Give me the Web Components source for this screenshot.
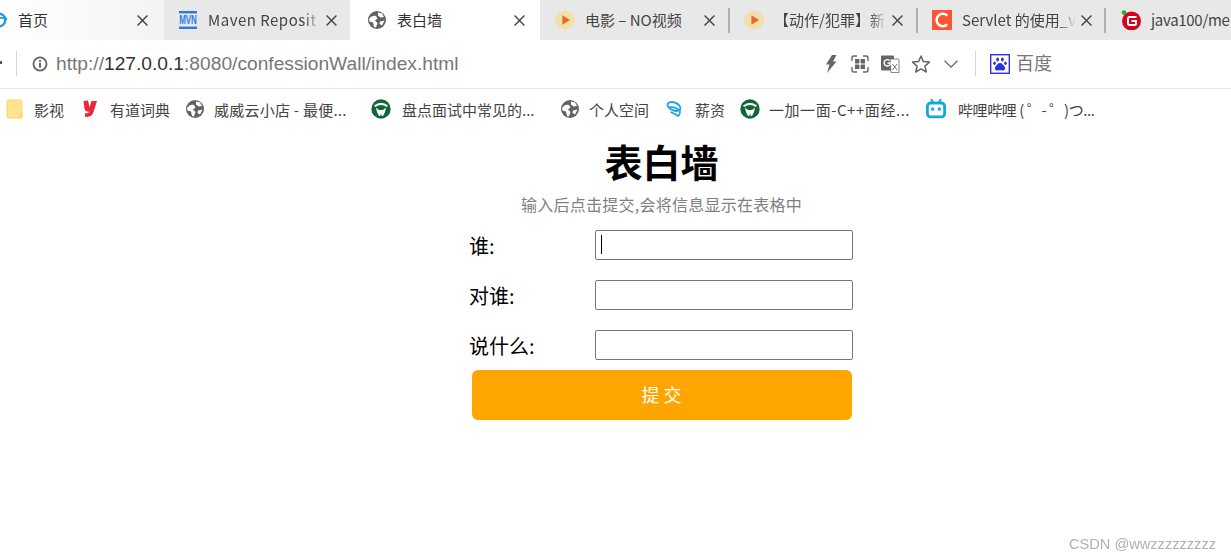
<!DOCTYPE html>
<html lang="zh">
<head>
<meta charset="utf-8">
<title>表白墙</title>
<style>
  html, body { margin: 0; height: 100%; background: #fff; overflow: hidden; }
  body { font-family: "Noto Sans CJK SC", sans-serif; }
  /* colouring of the url parts, these spans live in the light DOM */
  address-bar .dim { color: #777; }
  address-bar b { font-weight: 400; color: #333; }
</style>
</head>
<body>
<browser-window>
  <tab-strip slot="tabs">
    <browser-tab w="164" pad="-10" kind="first" gap="10" close="137"><app-icon name="swirl" slot="icon"></app-icon>首页</browser-tab>
    <browser-tab w="186" pad="14" gap="10" close="162" fade style="letter-spacing:.5px"><app-icon name="mvn" slot="icon"></app-icon>Maven Reposit</browser-tab>
    <browser-tab w="190" pad="17" gap="10" close="164" kind="active"><app-icon name="globe" slot="icon"></app-icon>表白墙</browser-tab>
    <browser-tab w="190" pad="15" gap="10" close="164" sep><app-icon name="play" slot="icon"></app-icon>电影 – NO视频</browser-tab>
    <browser-tab w="188" pad="14" gap="10" close="162" sep fade><app-icon name="play" slot="icon"></app-icon>【动作/犯罪】新</browser-tab>
    <browser-tab w="188" pad="14" gap="10" close="163" sep fade><app-icon name="csdn" slot="icon"></app-icon>Servlet 的使用_v</browser-tab>
    <browser-tab w="125" pad="15" gap="10" close="999" style="letter-spacing:-.3px"><app-icon name="gitee" slot="icon"></app-icon>java100/me</browser-tab>
  </tab-strip>
  <address-bar slot="toolbar">
    <span slot="url"><span class="dim">http://</span><b>127.0.0.1</b><span class="dim">:8080/confessionWall/index.html</span></span>
  </address-bar>
  <bookmark-bar slot="bookmarks">
    <bookmark-item w="80" pad="4" gap="10"><app-icon name="folder" slot="icon"></app-icon>影视</bookmark-item>
    <bookmark-item w="105" gap="10"><app-icon name="youdao" slot="icon"></app-icon>有道词典</bookmark-item>
    <bookmark-item w="186" gap="9" style="letter-spacing:.25px"><app-icon name="globe" slot="icon"></app-icon>威威云小店 - 最便...</bookmark-item>
    <bookmark-item w="189" gap="11"><app-icon name="shield" slot="icon"></app-icon>盘点面试中常见的...</bookmark-item>
    <bookmark-item w="105" gap="9"><app-icon name="globe" slot="icon"></app-icon>个人空间</bookmark-item>
    <bookmark-item w="75" gap="10"><app-icon name="ring" slot="icon"></app-icon>薪资</bookmark-item>
    <bookmark-item w="186" gap="9" style="letter-spacing:.55px"><app-icon name="shield" slot="icon"></app-icon>一加一面-C++面经...</bookmark-item>
    <bookmark-item w="175" gap="12" style="letter-spacing:-.4px"><app-icon name="bili" slot="icon"></app-icon>哔哩哔哩 ( ゜- ゜)つ...</bookmark-item>
  </bookmark-bar>
  <confession-form></confession-form>
</browser-window>
<page-mark>CSDN @wwzzzzzzzzz</page-mark>

<script>
// all the icons in one place, each drawn in a 20x20 box
const ICONS = {
  swirl: { size: 18, svg: `<circle cx="10" cy="10" r="7" fill="none" stroke="#1d9be8" stroke-width="2.6"/><path d="M2 11 C8 7 14 7 19 9" fill="none" stroke="#1d9be8" stroke-width="2"/>` },
  mvn: { size: 20, svg: `<rect x="1" y="1" width="18" height="2.4" fill="#2a7ae2"/><rect x="1" y="16.6" width="18" height="2.4" fill="#2a7ae2"/><text transform="translate(10 14) scale(1 1.5)" text-anchor="middle" font-family="Liberation Sans" font-weight="700" font-size="8" fill="#2a7ae2">MVN</text>` },
  globe: { size: 20, svg: `<circle cx="10" cy="10" r="9" fill="#5f6368"/><path d="M2 9 C4 6 7 5 9 6 L10.5 8.5 L8 10.5 L10.5 13 L9 17.5 L7 17 L6 12.5 L2.5 11.5 Z" fill="#fff"/><path d="M11 2.5 L15 3.5 L17 7 L13.5 7.5 L11 5.5 Z" fill="#fff"/><path d="M13 11.5 L17.5 10.5 L15 15.5 L12.5 14 Z" fill="#fff"/>` },
  play: { size: 20, svg: `<path d="M10 .3 L16 2.3 L19.7 7 L19.7 13 L16 17.7 L10 19.7 L4 17.7 L.3 13 L.3 7 L4 2.3 Z" fill="#f1dfac"/><path d="M7.4 5.2 L15 10 L7.4 14.8 Z" fill="#e66a22"/>` },
  csdn: { size: 20, svg: `<rect width="20" height="20" fill="#fc5531"/><path d="M15.2 5.6 A6.2 6.2 0 1 0 15.2 14.4" fill="none" stroke="#fff" stroke-width="2.6"/>` },
  gitee: { size: 20, svg: `<circle cx="10.5" cy="11" r="9.5" fill="#d8001b"/><path d="M15.5 7 H8.5 A1.5 1.5 0 0 0 7 8.5 V13.5 A1.5 1.5 0 0 0 8.5 15 H13.5 A1.5 1.5 0 0 0 15 13.5 V11 H10.5" fill="none" stroke="#fff" stroke-width="2"/><circle cx="3" cy="2.6" r="2.4" fill="#19b81f"/>` },
  folder: { size: 20, svg: `<rect x="3" y="1" width="15" height="18" rx="1.5" fill="#ffe48f" stroke="#f8d56f" stroke-width="1"/><rect x="15" y="15" width="3" height="4" rx="1" fill="#ffe48f" stroke="#f0c85a" stroke-width=".8"/>` },
  youdao: { size: 20, svg: `<path d="M3.5 2 L8 1.5 L9.5 8.5 L11.5 2 L17 2 L13.5 13 Q12 18.5 5 17.8 L5 14.3 Q8.5 14.6 9.4 12.8 Q5 13 4.5 9.5 Z" fill="#f0243a"/>` },
  shield: { size: 20, svg: `<circle cx="10" cy="10" r="9.7" fill="#0f6636"/><path d="M3 6.5 Q10 1.2 17 6.5 L15.8 8 Q10 4 4.2 8 Z" fill="#fff"/><path d="M5 8.5 L8 11 H12 L15 8.5 L14 13 L12 17 H10.8 L10 14.5 L9.2 17 H8 L6 13 Z" fill="#fff"/>` },
  ring: { size: 20, svg: `<ellipse cx="9" cy="7.5" rx="6.8" ry="4" transform="rotate(22 9 7.5)" fill="none" stroke="#1da1e6" stroke-width="1.8"/><path d="M3 8.5 Q10 7 15 12 Q15 16 13 17 Q9.5 14.5 5.5 13" fill="none" stroke="#1da1e6" stroke-width="1.7"/>` },
  bili: { size: 20, svg: `<path d="M5.5 .8 L8 4 M14.5 .8 L12 4" stroke="#14a9dc" stroke-width="2" stroke-linecap="round"/><rect x="1.4" y="4" width="17.2" height="13.8" rx="3" fill="none" stroke="#14a9dc" stroke-width="2.8"/><rect x="5.2" y="8.6" width="3" height="3" fill="#14a9dc"/><rect x="11.8" y="8.6" width="3" height="3" fill="#14a9dc"/>` },
  info: { size: 16, svg: `<circle cx="10" cy="10" r="8.2" fill="none" stroke="#5f6368" stroke-width="2.2"/><rect x="8.8" y="8.6" width="2.4" height="6" fill="#5f6368"/><rect x="8.8" y="5.2" width="2.4" height="2.3" fill="#5f6368"/>` },
  bolt: { size: 20, svg: `<path d="M12 1 H16.5 L13 7.5 H16.5 L7 19 L9.5 10.5 H6 Z" fill="#666"/>` },
  grid: { size: 20, svg: `<path d="M2 7 V4 Q2 2 4 2 H7 M13 2 H16 Q18 2 18 4 V7 M18 13 V16 Q18 18 16 18 H13 M7 18 H4 Q2 18 2 16 V13" fill="none" stroke="#666" stroke-width="1.4"/><rect x="5" y="5" width="4.4" height="4.4" rx=".6" fill="#666"/><rect x="10.6" y="5" width="4.4" height="4.4" rx=".6" fill="#666"/><rect x="5" y="10.6" width="4.4" height="4.4" rx=".6" fill="#666"/><rect x="10.6" y="10.6" width="4.4" height="4.4" rx=".6" fill="#666"/>` },
  translate: { size: 20, svg: `<rect x="1" y="1.5" width="13" height="15" rx="1" fill="#666"/><path d="M10 5 H18 Q19 5 19 6 V18.5 H11 Z" fill="#fff" stroke="#777" stroke-width=".9"/><path d="M9.5 6.5 A3.2 3.2 0 1 0 10 10.5 V9 H7.5" fill="none" stroke="#fff" stroke-width="1.4"/><path d="M12.5 10 L17 16 M17 10 L12.5 16" stroke="#777" stroke-width="1"/>` },
  star: { size: 20, svg: `<path d="M10 2 L12.4 7.6 L18.5 8.1 L13.9 12.1 L15.3 18 L10 14.9 L4.7 18 L6.1 12.1 L1.5 8.1 L7.6 7.6 Z" fill="none" stroke="#666" stroke-width="1.5" stroke-linejoin="round"/>` },
  chevron: { size: 16, svg: `<path d="M2 6 L10 14 L18 6" fill="none" stroke="#666" stroke-width="1.6"/>` },
  baidu: { size: 20, svg: `<rect x=".7" y=".7" width="18.6" height="18.6" fill="#fff" stroke="#2932e1" stroke-width="1.4"/><ellipse cx="7.6" cy="5.6" rx="1.4" ry="2" fill="#2932e1"/><ellipse cx="12.4" cy="5.6" rx="1.4" ry="2" fill="#2932e1"/><ellipse cx="4.6" cy="9.2" rx="1.3" ry="1.8" fill="#2932e1"/><ellipse cx="15.4" cy="9.2" rx="1.3" ry="1.8" fill="#2932e1"/><path d="M10 9 C12 9 13 11 14.5 12.5 C16 14.5 14.5 17 12.5 16.5 C11 16.2 9 16.2 7.5 16.5 C5.5 17 4 14.5 5.5 12.5 C7 11 8 9 10 9 Z" fill="#2932e1"/>` },
  close: { size: 11, svg: `<path d="M1 1 L19 19 M19 1 L1 19" stroke="#444" stroke-width="2.6"/>` }
};

class AppIcon extends HTMLElement {
  connectedCallback() {
    const icon = ICONS[this.getAttribute('name')];
    const root = this.shadowRoot || this.attachShadow({ mode: 'open' });
    root.innerHTML = `
      <style>:host { display: inline-flex; flex: none; letter-spacing: 0; } svg { display: block; }</style>
      <svg width="${icon.size}" height="${icon.size}" viewBox="0 0 20 20">${icon.svg}</svg>`;
  }
}

class BrowserWindow extends HTMLElement {
  constructor() {
    super();
    this.attachShadow({ mode: 'open' });
    this.shadowRoot.innerHTML = `
      <style>
        :host { display: flex; flex-direction: column; height: 100vh; }
      </style>
      <slot name="tabs"></slot>
      <slot name="toolbar"></slot>
      <slot name="bookmarks"></slot>
      <slot></slot>`;
  }
}

class TabStrip extends HTMLElement {
  constructor() {
    super();
    this.attachShadow({ mode: 'open' });
    this.shadowRoot.innerHTML = `
      <style>
        :host { display: flex; height: 40px; flex: none; background: #e8e8e8; overflow: hidden; }
      </style>
      <slot></slot>`;
  }
}

class BrowserTab extends HTMLElement {
  connectedCallback() {
    const root = this.shadowRoot || this.attachShadow({ mode: 'open' });
    const w = this.getAttribute('w');
    const pad = Number(this.getAttribute('pad'));
    const gap = Number(this.getAttribute('gap'));
    const close = Number(this.getAttribute('close'));
    const iconSize = pad < 0 ? 18 : 20;
    const titleEnd = this.hasAttribute('fade') ? close - 5 : close - 10;
    const titleWidth = close < 900 ? `width: ${titleEnd - pad - iconSize - gap}px;` : '';
    root.innerHTML = `
      <style>
        :host { display: flex; flex: none; box-sizing: border-box; position: relative;
                width: ${w}px; height: 40px; align-items: center;
                font: 15px "Noto Sans CJK SC", "Liberation Sans", sans-serif; color: #444; }
        :host([kind="active"]) { background: #fff; color: #333; }
        :host([kind="first"]) { background: linear-gradient(90deg, #fff, #f3f3f3); color: #333; }
        ::slotted([slot="icon"]) { margin-left: ${pad}px; }
        .title { margin: 0 0 2px ${gap}px; white-space: nowrap; ${titleWidth} }
        :host([fade]) .title { -webkit-mask-image: linear-gradient(90deg, #000 85%, transparent);
                 mask-image: linear-gradient(90deg, #000 85%, transparent); }
        .close { position: absolute; left: ${close}px; top: 15px; }
        :host([sep])::after { content: ""; position: absolute; right: 0; top: 8px;
                 width: 2px; height: 25px; background: #aeaeae; }
      </style>
      <slot name="icon"></slot>
      <span class="title"><slot></slot></span>
      ${close < 900 ? '<app-icon class="close" name="close"></app-icon>' : ''}`;
  }
}

class AddressBar extends HTMLElement {
  constructor() {
    super();
    this.attachShadow({ mode: 'open' });
    this.shadowRoot.innerHTML = `
      <style>
        :host { display: flex; align-items: center; height: 49px; flex: none; box-sizing: border-box;
                border-bottom: 1px solid #e6e6e6; background: #fff; padding-bottom: 1px; position: relative; }
        .stub { position: absolute; left: 0; top: 21px; width: 2px; height: 3px; background: #555; }
        .sep { width: 1px; height: 25px; background: #d5d5d5; flex: none; }
        .first { margin-left: 16px; }
        .info { margin: 0 8px 0 15px; }
        .url { flex: none; width: 764px; font: 19.2px "Liberation Sans", sans-serif; color: #777; white-space: nowrap; }
        .tools { display: flex; align-items: center; gap: 10px; }
        .star { margin-left: 1px; }
        .chevron { margin-left: 2px; }
        .baidu { margin: 0 6px 0 14px; }
        .label { font: 18px "Noto Sans CJK SC", sans-serif; color: #777; margin-bottom: 4px; }
        ::slotted(span) { white-space: nowrap; }
      </style>
      <span class="stub"></span>
      <span class="sep first"></span>
      <app-icon class="info" name="info"></app-icon>
      <span class="url"><slot name="url"></slot></span>
      <span class="tools">
        <app-icon name="bolt"></app-icon>
        <app-icon name="grid"></app-icon>
        <app-icon name="translate"></app-icon>
        <app-icon class="star" name="star"></app-icon>
        <app-icon class="chevron" name="chevron"></app-icon>
      </span>
      <span class="sep" style="margin-left:16px"></span>
      <app-icon class="baidu" name="baidu"></app-icon>
      <span class="label">百度</span>`;
  }
}

class BookmarkBar extends HTMLElement {
  constructor() {
    super();
    this.attachShadow({ mode: 'open' });
    this.shadowRoot.innerHTML = `
      <style>
        :host { display: flex; align-items: center; flex: none; background: #fff; padding-bottom: 3px; height: 40px; }
      </style>
      <slot></slot>`;
  }
}

class BookmarkItem extends HTMLElement {
  connectedCallback() {
    const root = this.shadowRoot || this.attachShadow({ mode: 'open' });
    const w = this.getAttribute('w');
    const pad = this.getAttribute('pad') || 0;
    const gap = this.getAttribute('gap');
    root.innerHTML = `
      <style>
        :host { display: flex; align-items: center; flex: none; box-sizing: border-box;
                width: ${w}px; padding-left: ${pad}px; gap: ${gap}px;
                font: 15px "Noto Sans CJK SC", "Liberation Sans", sans-serif; color: #444; white-space: nowrap; }
      </style>
      <slot name="icon"></slot>
      <span><slot></slot></span>`;
  }
}

// the page itself: heading, three labelled inputs, submit button
class ConfessionForm extends HTMLElement {
  constructor() {
    super();
    this.attachShadow({ mode: 'open' });
    this.shadowRoot.innerHTML = `
      <style>
        :host { display: flex; flex-direction: column; align-items: center; padding-left: 92px;
                font-family: "Noto Sans CJK SC", sans-serif; color: #000; }
        h1 { margin: 4px 0 0; font-size: 38px; line-height: 50px; font-weight: 700; }
        p { margin: 6px 0 0; font-size: 16px; line-height: 24px; color: #808080; letter-spacing: .26px; }
        .rows { width: 383px; margin-top: 14px; display: flex; flex-direction: column; gap: 20px; }
        .row { display: grid; grid-template-columns: 125px 258px; align-items: center; height: 30px; position: relative; font-size: 20px; }
        .row > span:first-child { margin-left: -1px; }
        input { box-sizing: border-box; width: 258px; height: 30px; margin: 0; padding: 0 5px;
                border: 1px solid #767676; border-radius: 2px; background: #fff; outline: none; }
        .caret { position: absolute; left: 131px; top: 5px; width: 1px; height: 19px; background: #000; }
        button { width: 380px; height: 50px; margin: 10px 0 0; padding: 0 0 2px; border: 0; border-radius: 6px;
                 background: #ffa500; color: #fff; font: 18px "Noto Sans CJK SC", sans-serif; }
      </style>
      <h1>表白墙</h1>
      <p>输入后点击提交,会将信息显示在表格中</p>
      <div class="rows">
        <label class="row"><span>谁:</span><input type="text"><span class="caret"></span></label>
        <label class="row"><span>对谁:</span><input type="text"></label>
        <label class="row"><span>说什么:</span><input type="text"></label>
      </div>
      <button type="button">提 交</button>`;
  }
}

class PageMark extends HTMLElement {
  constructor() {
    super();
    this.attachShadow({ mode: 'open' });
    this.shadowRoot.innerHTML = `
      <style>
        :host { position: fixed; right: 15px; bottom: 8px; font: 14.6px "Liberation Sans", sans-serif; color: #b0b0b0; }
      </style>
      <slot></slot>`;
  }
}

customElements.define('app-icon', AppIcon);
customElements.define('browser-window', BrowserWindow);
customElements.define('tab-strip', TabStrip);
customElements.define('browser-tab', BrowserTab);
customElements.define('address-bar', AddressBar);
customElements.define('bookmark-bar', BookmarkBar);
customElements.define('bookmark-item', BookmarkItem);
customElements.define('confession-form', ConfessionForm);
customElements.define('page-mark', PageMark);
</script>
</body>
</html>
